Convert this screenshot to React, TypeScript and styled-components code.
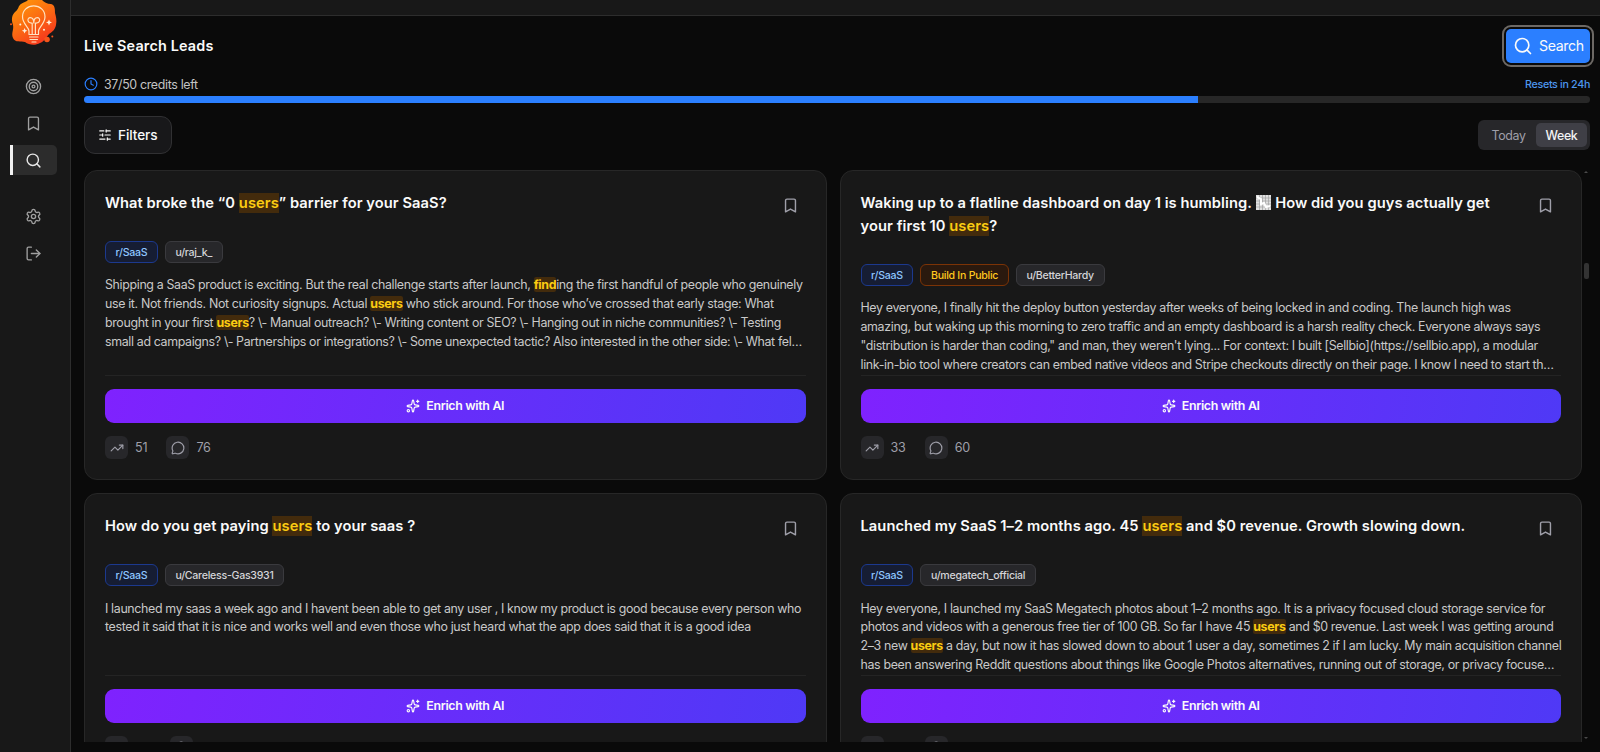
import React from "react";
import styled, { createGlobalStyle, css } from "styled-components";
import {
  Target, Bookmark, Search, Settings, LogOut, Clock, SlidersHorizontal,
  Sparkles, TrendingUp, MessageCircle,
} from "lucide-react";

const GlobalStyle = createGlobalStyle`
  *, *::before, *::after { box-sizing: border-box; }
  body {
    margin: 0;
    background: #0a0a0a;
    color: #fafafa;
    font-family: Inter, "Liberation Sans", sans-serif;
    overflow: hidden;
  }
  button { font: inherit; color: inherit; border: 0; padding: 0; background: none; cursor: pointer; }
`;

const Shell = styled.div`
  display: flex;
  width: 100%;
  height: 752px;
  background: #0a0a0a;
`;

const Sidebar = styled.aside`
  width: 71px;
  flex: none;
  background: #181818;
  border-right: 1px solid #2d2d2d;
  padding: 0 13px 0 10px;
`;

const LogoBox = styled.div`
  height: 71px;
  svg { display: block; }
`;

const NavGroup = styled.nav`
  display: grid;
  gap: 7px;
  margin-bottom: 26px;
`;

const NavItem = styled.button<{ $active?: boolean }>`
  height: 30px;
  width: 47px;
  display: flex;
  align-items: center;
  justify-content: center;
  padding-right: 1px;
  color: #a0a0a0;
  border-radius: 0 5px 5px 0;
  ${(p) => p.$active && css`
    background: #2c2c2c;
    color: #e8e8e8;
    box-shadow: inset 3px 0 0 #f1f1f1;
  `}
`;

const Page = styled.div`
  flex: 1;
  min-width: 0;
  display: flex;
  flex-direction: column;
`;

const TopBar = styled.div`
  height: 16px;
  flex: none;
  background: #181818;
  border-bottom: 1px solid #2d2d2d;
`;

const Main = styled.main`
  flex: 1;
  min-height: 0;
  padding: 13px 10px 10px 13px;
  display: flex;
  flex-direction: column;
`;

const Header = styled.header`
  display: flex;
  align-items: center;
  justify-content: space-between;
  height: 34px;
  flex: none;
`;

const PageTitle = styled.h1`
  margin: 0;
  padding-bottom: 1px;
  font-size: 14.4px;
  font-weight: 600;
  letter-spacing: 0.17px;
`;

const SearchButton = styled.button`
  display: flex;
  align-items: center;
  gap: 6px;
  height: 34px;
  width: 84px;
  padding: 0 0 1px 7px;
  background: #2b7fff;
  border-radius: 5px;
  font-size: 14.2px;
  letter-spacing: -0.4px;
  outline: 2px solid #6d6965;
  outline-offset: 2.5px;
`;

const CreditsRow = styled.div`
  display: flex;
  align-items: center;
  justify-content: space-between;
  height: 18px;
  margin-top: 12px;
  flex: none;
`;

const Credits = styled.div`
  display: flex;
  align-items: center;
  gap: 6px;
  font-size: 12.4px;
  letter-spacing: -0.33px;
  color: #c4c4c4;
  svg { color: #2b7fff; }
`;

const Resets = styled.span`
  font-size: 10.7px;
  font-weight: 500;
  letter-spacing: -0.32px;
  color: #4d97ef;
`;

const Track = styled.div`
  height: 7px;
  margin-top: 3px;
  border-radius: 4px;
  background: #272727;
  overflow: hidden;
  flex: none;
`;

const Fill = styled.div`
  height: 100%;
  background: #2b7fff;
`;

const Toolbar = styled.div`
  display: flex;
  align-items: center;
  justify-content: space-between;
  height: 38px;
  margin-top: 13px;
  flex: none;
`;

const FilterButton = styled.button`
  display: flex;
  align-items: center;
  gap: 6px;
  height: 38px;
  width: 88px;
  padding-left: 13px;
  border: 1px solid #313133;
  border-radius: 11px;
  background: #18181a;
  font-size: 13.6px;
  font-weight: 500;
  letter-spacing: -0.1px;
`;

const Segments = styled.div`
  display: flex;
  height: 30px;
  padding: 3px;
  border-radius: 6px;
  background: #27272a;
`;

const Segment = styled.button<{ $active?: boolean }>`
  width: ${(p) => (p.$active ? 51 : 55)}px;
  border-radius: 5px;
  font-size: 12.4px;
  letter-spacing: -0.35px;
  color: ${(p) => (p.$active ? "#f4f4f5" : "#9f9fa9")};
  background: ${(p) => (p.$active ? "#3f3f46" : "transparent")};
  font-weight: ${(p) => (p.$active ? 500 : 400)};
`;

const Feed = styled.section`
  display: flex;
  gap: 1px;
  flex: 1;
  min-height: 0;
  margin-top: 16px;
`;

const Grid = styled.div`
  flex: 1;
  min-height: 0;
  overflow: hidden;
  display: grid;
  grid-template-columns: 1fr 1fr;
  grid-template-rows: 310px 287px;
  gap: 13.2px 13px;
`;

const ScrollBar = styled.div`
  width: 7px;
  display: flex;
  flex-direction: column;
  align-items: center;
  justify-content: space-between;
  padding: 1px 1px 3px 0;
`;

const Arrow = styled.i<{ $down?: boolean }>`
  border: 2px solid transparent;
  border-width: ${(p) => (p.$down ? "2px 2px 0" : "0 2px 2px")};
  border-${(p) => (p.$down ? "top" : "bottom")}-color: #4a4a4a;
`;

const ThumbLane = styled.div`
  flex: 1;
  padding-top: 90px;
`;

const Thumb = styled.div`
  width: 5px;
  height: 16px;
  border-radius: 2px;
  background: #333;
`;

const CardBox = styled.article`
  display: flex;
  flex-direction: column;
  min-width: 0;
  padding: 20px;
  border: 1px solid #272727;
  border-radius: 13px;
  background: #181818;
`;

const CardHead = styled.div`
  display: flex;
  justify-content: space-between;
  align-items: flex-start;
  padding-right: 7px;
  color: #9f9fa9;
  svg { flex: none; }
`;

const CardTitle = styled.h2`
  margin: 0;
  padding-top: 1px;
  color: #fafafa;
  font-size: 14.7px;
  font-weight: 600;
  letter-spacing: 0.06px;
  line-height: 23px;
  white-space: nowrap;
`;

const TitleLine = styled.span`
  display: block;
`;

const SaveIcon = styled.span`
  display: flex;
  height: 23px;
  padding-top: 6px;
`;

const Mark = styled.mark<{ $bold?: boolean }>`
  background: #432b0c;
  color: #fbcc12;
  border-radius: ${(p) => (p.$bold ? 2 : 0)}px;
  font-weight: ${(p) => (p.$bold ? 700 : "inherit")};
  padding: ${(p) => (p.$bold ? 0 : "1px 0")};
`;

const Chips = styled.div`
  display: flex;
  gap: 7px;
  margin-top: 26px;
`;

type Tone = "blue" | "amber" | "gray";
const tones: Record<Tone, [string, string, string]> = {
  blue: ["#161d33", "#1c398e", "#8ec5ff"],
  amber: ["#2a190e", "#7b3306", "#ffc81e"],
  gray: ["#27272a", "#3a3a3e", "#d4d4d8"],
};

const Chip = styled.span<{ $tone: Tone }>`
  display: flex;
  align-items: center;
  height: 22px;
  padding: 0 9.7px 0 9.5px;
  border: 1px solid ${(p) => tones[p.$tone][1]};
  border-radius: 6px;
  background: ${(p) => tones[p.$tone][0]};
  color: ${(p) => tones[p.$tone][2]};
  font-size: 10.6px;
  font-weight: 500;
  letter-spacing: -0.27px;
`;

const Body = styled.p`
  margin: 13.4px 0 0;
  font-size: 12.4px;
  line-height: 18.8px;
  letter-spacing: -0.345px;
  color: #c9c9c9;
  white-space: nowrap;
`;

const BodyLine = styled.span`
  display: block;
`;

const CardFoot = styled.div`
  margin-top: auto;
  padding-top: 13px;
  border-top: 1px solid #242424;
`;

const EnrichButton = styled.button`
  display: flex;
  align-items: center;
  justify-content: center;
  gap: 6px;
  width: 100%;
  height: 34px;
  border-radius: 9px;
  background: linear-gradient(100deg, #7f22fe, #4f39f6);
  padding-bottom: 1px;
  font-size: 12.4px;
  font-weight: 600;
  letter-spacing: -0.33px;
`;

const Stats = styled.div`
  display: flex;
  gap: 19px;
  margin-top: 13px;
`;

const Stat = styled.div`
  display: flex;
  align-items: center;
  gap: 7px;
  font-size: 12.6px;
  letter-spacing: -0.2px;
  color: #9f9fa9;
`;

const StatIcon = styled.span`
  display: grid;
  place-items: center;
  width: 23px;
  height: 23px;
  border-radius: 6px;
  background: #27272a;
`;

const ChartGlyph = styled.svg`
  display: inline-block;
  vertical-align: -2px;
  margin-left: 1px;
`;

function Logo() {
  return (
    <svg width="48" height="46" viewBox="0 0 48 46" fill="none">
      <defs>
        <linearGradient id="flame" x1="0.1" y1="0" x2="0.75" y2="1">
          <stop offset="0" stopColor="#ff9a08" />
          <stop offset="0.5" stopColor="#fb6a12" />
          <stop offset="1" stopColor="#f6301f" />
        </linearGradient>
      </defs>
      <path
        fill="url(#flame)"
        d="M18 0H32C34 2 37 4 41 4C45 5 45 9 45 13C46 17 47 20 46 25C45 30 42 32 39 34C36 37 35 41 30 43C25 46 19 45 15 42C11 41 5 43 3 38C1 33 4 30 3 25C1 19 2 15 5 12C9 9 8 6 11 4C14 2 16 2 18 0Z"
      />
      <circle cx="37" cy="39.5" r="2.8" fill="#f6541a" />
      <circle cx="42.3" cy="36.5" r="1" fill="#f6541a" />
      <circle cx="1" cy="24.3" r="1" fill="#f6541a" />
      <g stroke="#ffe3c2" strokeWidth="1.2" strokeLinecap="round" strokeLinejoin="round">
        <path d="M19 34.5V31C19 27 12.5 24 12.5 16.8C12.5 10.5 17.5 5.8 23.7 5.8S35 10.5 35 16.8C35 24 28.5 27 28.5 31V34.5Z" />
        <path d="M22.2 34V23M25.4 34V23M22.2 23C17 23.5 16.8 17.6 20.3 17.6C22.8 17.6 23.8 20.2 23.8 23C23.8 20.2 24.8 17.6 27.3 17.6C30.8 17.6 30.6 23.5 25.4 23" />
        <path d="M19.5 37H28M20 39.5H27.5M22 42H26" />
      </g>
      <g fill="#fff0dc">
        <path d="M14.6 28L15.5 30L17.4 30.8L15.5 31.6L14.6 33.6L13.7 31.6L11.8 30.8L13.7 30Z" />
        <path d="M39 19.5L39.9 21.6L42 22.4L39.9 23.2L39 25.4L38.1 23.2L36 22.4L38.1 21.6Z" />
        <circle cx="10.3" cy="24.6" r="1" />
        <circle cx="34" cy="29.7" r="1" />
      </g>
    </svg>
  );
}

const FallingChart = () => (
  <ChartGlyph width="15" height="15" viewBox="0 0 15 15">
    <rect width="15" height="15" fill="#e0e0e0" />
    <path d="M3.5 0V15M6.5 0V15M9.5 0V15M12.5 0V15M0 3H15M0 6H15M0 9H15M0 12H15" stroke="#a0a0a0" strokeWidth="0.7" />
    <path d="M1 2L5 4V9L8 8L10 12L14 11" stroke="#fff" strokeWidth="2" fill="none" />
  </ChartGlyph>
);

/* *word* marks a keyword hit inside post text, {chart} an inline pictograph */
function rich(text: string, bold: boolean) {
  return text.split(/(\*[^*]+\*|\{chart\})/).map((part, i) => {
    if (part === "{chart}") return <FallingChart key={i} />;
    if (part.startsWith("*")) return <Mark key={i} $bold={bold}>{part.slice(1, -1)}</Mark>;
    return part;
  });
}

interface Post {
  title: string[];
  chips: [string, Tone][];
  body: string[];
  ups: number;
  comments: number;
}

const posts: Post[] = [
  {
    title: ["What broke the “0 *users*” barrier for your SaaS?"],
    chips: [["r/SaaS", "blue"], ["u/raj_k_", "gray"]],
    body: [
      "Shipping a SaaS product is exciting. But the real challenge starts after launch, *find*ing the first handful of people who genuinely",
      "use it. Not friends. Not curiosity signups. Actual *users* who stick around. For those who’ve crossed that early stage: What",
      "brought in your first *users*? \\- Manual outreach? \\- Writing content or SEO? \\- Hanging out in niche communities? \\- Testing",
      "small ad campaigns? \\- Partnerships or integrations? \\- Some unexpected tactic? Also interested in the other side: \\- What fel…",
    ],
    ups: 51,
    comments: 76,
  },
  {
    title: [
      "Waking up to a flatline dashboard on day 1 is humbling. {chart} How did you guys actually get",
      "your first 10 *users*?",
    ],
    chips: [["r/SaaS", "blue"], ["Build In Public", "amber"], ["u/BetterHardy", "gray"]],
    body: [
      "Hey everyone, I finally hit the deploy button yesterday after weeks of being locked in and coding. The launch high was",
      "amazing, but waking up this morning to zero traffic and an empty dashboard is a harsh reality check. Everyone always says",
      "\"distribution is harder than coding,\" and man, they weren't lying... For context: I built [Sellbio](https://sellbio.app), a modular",
      "link-in-bio tool where creators can embed native videos and Stripe checkouts directly on their page. I know I need to start th…",
    ],
    ups: 33,
    comments: 60,
  },
  {
    title: ["How do you get paying *users* to your saas ?"],
    chips: [["r/SaaS", "blue"], ["u/Careless-Gas3931", "gray"]],
    body: [
      "I launched my saas a week ago and I havent been able to get any user , I know my product is good because every person who",
      "tested it said that it is nice and works well and even those who just heard what the app does said that it is a good idea",
    ],
    ups: 48,
    comments: 94,
  },
  {
    title: ["Launched my SaaS 1–2 months ago. 45 *users* and $0 revenue. Growth slowing down."],
    chips: [["r/SaaS", "blue"], ["u/megatech_official", "gray"]],
    body: [
      "Hey everyone, I launched my SaaS Megatech photos about 1–2 months ago. It is a privacy focused cloud storage service for",
      "photos and videos with a generous free tier of 100 GB. So far I have 45 *users* and $0 revenue. Last week I was getting around",
      "2–3 new *users* a day, but now it has slowed down to about 1 user a day, sometimes 2 if I am lucky. My main acquisition channel",
      "has been answering Reddit questions about things like Google Photos alternatives, running out of storage, or privacy focuse…",
    ],
    ups: 20,
    comments: 48,
  },
];

function Card({ post }: { post: Post }) {
  return (
    <CardBox>
      <CardHead>
        <CardTitle>
          {post.title.map((line) => <TitleLine key={line}>{rich(line, false)}</TitleLine>)}
        </CardTitle>
        <SaveIcon><Bookmark size={17} strokeWidth={2} /></SaveIcon>
      </CardHead>
      <Chips>
        {post.chips.map(([label, tone]) => <Chip key={label} $tone={tone}>{label}</Chip>)}
      </Chips>
      <Body>
        {post.body.map((line) => <BodyLine key={line}>{rich(line, true)}</BodyLine>)}
      </Body>
      <CardFoot>
        <EnrichButton><Sparkles size={14} />Enrich with AI</EnrichButton>
        <Stats>
          <Stat><StatIcon><TrendingUp size={14} /></StatIcon>{post.ups}</Stat>
          <Stat><StatIcon><MessageCircle size={14} /></StatIcon>{post.comments}</Stat>
        </Stats>
      </CardFoot>
    </CardBox>
  );
}

export default function App() {
  return (
    <>
      <GlobalStyle />
      <Shell>
        <Sidebar>
          <LogoBox><Logo /></LogoBox>
          <NavGroup>
            <NavItem><Target size={17} strokeWidth={1.9} /></NavItem>
            <NavItem><Bookmark size={17} strokeWidth={1.9} /></NavItem>
            <NavItem $active><Search size={17} strokeWidth={2} /></NavItem>
          </NavGroup>
          <NavGroup>
            <NavItem><Settings size={17} strokeWidth={1.9} /></NavItem>
            <NavItem><LogOut size={17} strokeWidth={1.9} /></NavItem>
          </NavGroup>
        </Sidebar>
        <Page>
          <TopBar />
          <Main>
            <Header>
              <PageTitle>Live Search Leads</PageTitle>
              <SearchButton><Search size={20} strokeWidth={2} />Search</SearchButton>
            </Header>
            <CreditsRow>
              <Credits><Clock size={14} />37/50 credits left</Credits>
              <Resets>Resets in 24h</Resets>
            </CreditsRow>
            <Track><Fill style={{ width: `${(37 / 50) * 100}%` }} /></Track>
            <Toolbar>
              <FilterButton><SlidersHorizontal size={14} />Filters</FilterButton>
              <Segments>
                <Segment>Today</Segment>
                <Segment $active>Week</Segment>
              </Segments>
            </Toolbar>
            <Feed>
              <Grid>{posts.map((post) => <Card key={post.title[0]} post={post} />)}</Grid>
              <ScrollBar>
                <Arrow />
                <ThumbLane><Thumb /></ThumbLane>
                <Arrow $down />
              </ScrollBar>
            </Feed>
          </Main>
        </Page>
      </Shell>
    </>
  );
}
